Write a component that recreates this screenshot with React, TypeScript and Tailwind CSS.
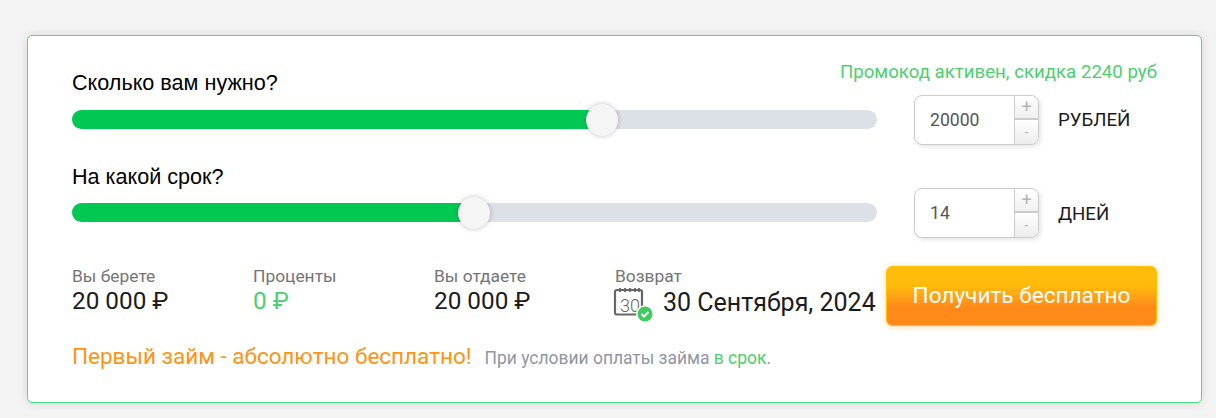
import React from "react";

function Slider({ percent }: { percent: number }) {
  return (
    <div className="relative mt-[15px] h-[19px] w-[805px] rounded-full bg-[#dce0e7]">
      <div className="h-full rounded-full bg-[#00c853]" style={{ width: `${percent}%` }}></div>
      <div
        className="absolute top-1/2 h-8 w-8 -translate-x-1/2 -translate-y-1/2 rounded-full bg-[#f5f5f5] shadow-[0_0_5px_rgba(0,0,0,0.25)]"
        style={{ left: `${percent}%` }}
      ></div>
    </div>
  );
}

function Stepper({ value }: { value: string }) {
  return (
    <div className="flex h-[50px] w-[125px] overflow-hidden rounded-[8px] border border-[#ccc] bg-white shadow-[2px_2px_4px_rgba(0,0,0,0.1)]">
      <div className="flex flex-1 items-center pt-[1px] pl-[15px] text-[17.6px] text-[#555]">{value}</div>
      <div className="flex w-6 flex-col border-l border-[#ccc] text-[#b5b5b5]">
        <div className="flex h-6 items-center justify-center border-b-2 border-[#ccc] bg-gradient-to-b from-white to-[#f0f0f0] text-[18px] leading-none">+</div>
        <div className="flex flex-1 items-center justify-center bg-gradient-to-b from-white to-[#ececec] text-[14px] leading-none">-</div>
      </div>
    </div>
  );
}

function Stat({ label, value, green }: { label: string; value: string; green?: boolean }) {
  return (
    <div className="w-[181px]">
      <div className="text-[17.4px] leading-[20px] text-[#757575]">{label}</div>
      <div className={`text-[24.3px] leading-[30px] ${green ? "text-[#4cd06f]" : "text-[#1c1c1c]"}`}>{value}</div>
    </div>
  );
}

function CalendarIcon() {
  return (
    <svg width="40" height="34" viewBox="0 0 40 34" className="ml-[-1px] shrink-0 overflow-visible">
      <path d="M24 28.5H3a2 2 0 0 1-2-2V6a2 2 0 0 1 2-2h23a2 2 0 0 1 2 2v16" fill="none" stroke="#666" strokeWidth="2.2" />
      <path d="M6 2v4M11 2v4M16 2v4M21 2v4M25 2v4" stroke="#666" strokeWidth="1.8" />
      <text x="6" y="25.5" fontFamily="Roboto, sans-serif" fontSize="18" fontWeight="300" fill="#666">30</text>
      <circle cx="31" cy="28" r="9" fill="#fff" />
      <circle cx="31" cy="28" r="7.5" fill="#3ecb5f" />
      <path d="M27.5 28l2.5 2.5 4.5-4.5" fill="none" stroke="#fff" strokeWidth="2" />
    </svg>
  );
}

export default function App() {
  return (
    <div className="h-[418px] overflow-hidden bg-[#f4f4f4] pt-[35px] pl-[27px] font-['Roboto',sans-serif]">
      <div className="h-[368px] w-[1175px] rounded-[5px] border border-[#4ade80] bg-white pt-[26px] pr-[44px] pl-[44px] shadow-[0_0_12px_rgba(0,0,0,0.12)]">
        {/* Amount */}
        <div className="flex h-[33px] items-start justify-between">
          <div className="pt-[7px] font-['Liberation_Sans',sans-serif] text-[21.6px] leading-[28px] text-black">Сколько вам нужно?</div>
          <div className="-mt-[1px] text-[18.67px] leading-[22px] text-[#4cd06f]">Промокод активен, скидка 2240 руб</div>
        </div>
        <div className="flex items-start">
          <Slider percent={65.8} />
          <div className="ml-[37px]"><Stepper value="20000" /></div>
          <div className="ml-[19px] pt-[12px] text-[18.67px] leading-[26px] text-[#1c1c1c]">РУБЛЕЙ</div>
        </div>

        {/* Term */}
        <div className="mt-[18px] h-[25px] font-['Liberation_Sans',sans-serif] text-[21.6px] leading-[28px] text-black">На какой срок?</div>
        <div className="flex items-start">
          <Slider percent={49.9} />
          <div className="ml-[37px]"><Stepper value="14" /></div>
          <div className="ml-[19px] pt-[13px] text-[18.67px] leading-[26px] text-[#1c1c1c]">ДНЕЙ</div>
        </div>

        {/* Summary */}
        <div className="mt-[28px] flex items-start">
          <Stat label="Вы берете" value="20 000 ₽" />
          <Stat label="Проценты" value="0 ₽" green />
          <Stat label="Вы отдаете" value="20 000 ₽" />
          <div className="w-[271px]">
            <div className="text-[17.4px] leading-[20px] text-[#757575]">Возврат</div>
            <div className="flex items-center">
              <CalendarIcon />
              <span className="ml-[9px] whitespace-nowrap text-[25px] leading-[30px] text-[#1c1c1c]">30 Сентября, 2024</span>
            </div>
          </div>
          <button className="h-[60px] w-[271px] rounded-[6px] border border-[#ffc107] bg-gradient-to-b from-[#ffbc0a] from-30% to-[#ff8a1a] to-70% text-[22.6px] text-white shadow-[0_1px_6px_rgba(255,160,0,0.35)]">
            Получить бесплатно
          </button>
        </div>

        {/* Note */}
        <div className="mt-[15px] flex items-baseline">
          <span className="text-[22.5px] leading-[30px] text-[#ff9312]">Первый займ - абсолютно бесплатно!</span>
          <span className="ml-[13px] text-[17.45px] text-[#8f96a3]">
            При условии оплаты займа <span className="text-[#4cd06f]">в срок</span>.
          </span>
        </div>
      </div>
    </div>
  );
}
